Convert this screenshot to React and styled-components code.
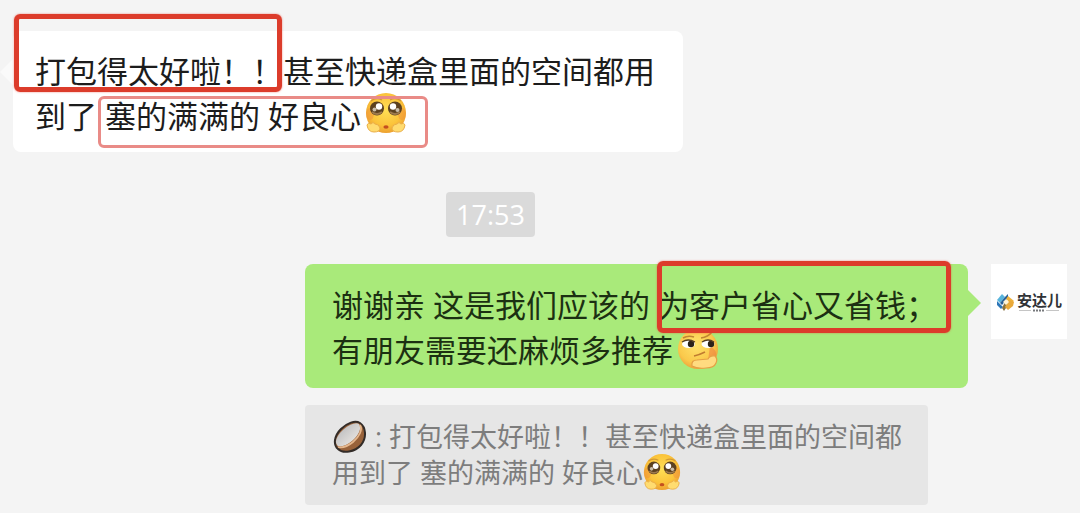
import React from "react";
import styled, { createGlobalStyle } from "styled-components";

const GlobalStyle = createGlobalStyle`
  * { box-sizing: border-box; }
  body {
    margin: 0;
    background: #f4f4f4;
    font-family: "Open Sans", "Noto Sans CJK SC", sans-serif;
  }
`;

const Chat = styled.main`
  display: flex;
  flex-direction: column;
  padding: 31px 13px 8px;
`;

const Row = styled.div`
  display: flex;
  align-items: flex-start;
  justify-content: ${(p) => (p.$own ? "flex-end" : "flex-start")};
  gap: 23px;
`;

const Column = styled.div`
  display: flex;
  flex-direction: column;
  align-items: flex-start;
  gap: 17px;
`;

const Bubble = styled.p`
  position: relative;
  min-width: ${(p) => (p.$own ? "663px" : "670px")};
  margin: 0;
  padding: ${(p) => (p.$own ? "19px 30px 15px 27px" : "18px 28px 13px 22px")};
  border-radius: 8px;
  background: ${(p) => (p.$own ? "#a9ea7a" : "#ffffff")};
  color: ${(p) => (p.$own ? "#1c3012" : "#1c1c1c")};
  font-size: 31px;
  line-height: 45px;
  white-space: nowrap;

  &::before {
    content: "";
    position: absolute;
    top: ${(p) => (p.$own ? "26px" : "28px")};
    ${(p) => (p.$own ? "left: 100%;" : "right: 100%;")}
    border: 13px solid transparent;
    ${(p) =>
      p.$own
        ? "border-left-color: #a9ea7a; border-right-width: 0;"
        : "border-right-color: #fafafa; border-left-width: 0;"}
  }
`;

const Marked = styled.mark`
  position: relative;
  display: inline-block;
  background: none;
  color: inherit;

  &::after {
    content: "";
    position: absolute;
    z-index: 1;
    inset: ${(p) => p.$inset};
    border: ${(p) => (p.$light ? "3px solid #e98b87" : "5px solid #dc3c2b")};
    border-radius: 6px;
    box-shadow: ${(p) =>
      p.$light ? "none" : "0 0 2px rgba(235, 70, 55, 0.7)"};
  }
`;

const TimeRow = styled.div`
  display: flex;
  justify-content: center;
  padding: 40px 99px 27px 0;
`;

const Time = styled.time`
  padding: 0 10px;
  border-radius: 4px;
  background: #dadada;
  color: #ffffff;
  font-size: 27px;
  line-height: 45px;
`;

const Quote = styled.blockquote`
  min-width: 623px;
  margin: 0;
  padding: 14px 26px 14px 27px;
  border-radius: 4px;
  background: #e6e6e6;
  color: #7d7d7d;
  font-size: 27px;
  line-height: 36px;
  white-space: nowrap;
`;

const Icon = styled.svg`
  width: ${(p) => p.$size}px;
  height: ${(p) => p.$size}px;
  margin: -2px 0;
  vertical-align: top;
`;

const BubbleIcon = styled(Icon)`
  margin: -2px 0 -2px 4px;
`;

const CoconutIcon = styled(Icon)`
  margin: 1px 8px 0 1px;
`;

const Avatar = styled.div`
  display: flex;
  align-items: center;
  justify-content: center;
  gap: 2px;
  width: 76px;
  height: 75px;
  background: #ffffff;
`;

const LogoMark = styled.svg`
  width: 19px;
  height: 20px;
`;

const LogoName = styled.div`
  display: flex;
  flex-direction: column;
  color: #303236;
  font-size: 15px;
  font-weight: 700;
  line-height: 18px;
`;

const LogoRule = styled.svg`
  width: 45px;
  height: 3px;
`;

function PleadingFace({ size, as: Part = Icon }) {
  return (
    <Part $size={size} viewBox="0 0 42 42" role="img" aria-label="可怜">
      <defs>
        <radialGradient id="plead" cx="50%" cy="42%" r="60%">
          <stop offset="0" stopColor="#ffdf55" />
          <stop offset="0.65" stopColor="#fbc43b" />
          <stop offset="1" stopColor="#eb9c2e" />
        </radialGradient>
      </defs>
      <ellipse cx="21" cy="21" rx="20" ry="20" fill="url(#plead)" />
      <ellipse cx="5" cy="22" rx="4" ry="6" fill="#f0923a" opacity="0.5" />
      <ellipse cx="37" cy="22" rx="4" ry="6" fill="#f0923a" opacity="0.5" />
      <path d="M6 9Q11 5 17 8M25 8Q31 5 36 9" fill="none" stroke="#d39a35" strokeWidth="1.200" />
      <circle cx="12" cy="16.500" r="7" fill="#5c4120" />
      <circle cx="30" cy="16.500" r="7" fill="#5c4120" />
      <path d="M7 20q5 4 10 0M25 20q5 4 10 0" fill="none" stroke="#9d7a4d" strokeWidth="1.800" />
      <circle cx="14" cy="14.500" r="3.200" fill="#fff" />
      <circle cx="28" cy="14.500" r="3.200" fill="#fff" />
      <circle cx="9.500" cy="17.500" r="2" fill="#c9bda9" />
      <circle cx="32.500" cy="18" r="2" fill="#c9bda9" />
      <ellipse cx="21" cy="35" rx="2.600" ry="1.800" fill="#c4501f" />
      <path d="M2 33q1-3 4-1q2-3 4 0q4 0 5 4q0 4-6 4q-6 0-7-7zM40 33q-1-3-4-1q-2-3-4 0q-4 0-5 4q0 4 6 4q6 0 7-7z" fill="#ffdc70" stroke="#eaae48" strokeWidth="1" />
    </Part>
  );
}

function ThinkingFace() {
  return (
    <BubbleIcon $size={44} viewBox="0 0 44 44" role="img" aria-label="思考">
      <defs>
        <radialGradient id="think" cx="45%" cy="40%" r="62%">
          <stop offset="0" stopColor="#ffe26c" />
          <stop offset="0.7" stopColor="#fac94b" />
          <stop offset="1" stopColor="#eba13a" />
        </radialGradient>
      </defs>
      <ellipse cx="21" cy="23" rx="20" ry="20" fill="url(#think)" />
      <path d="M33 20q8 4 6 12l-8 3z" fill="#ef8443" opacity="0.6" />
      <path d="M6 12q5-3 11-1M24 12q7-1 11-6" fill="none" stroke="#c08632" strokeWidth="1.500" />
      <ellipse cx="11.500" cy="18" rx="6.500" ry="4" fill="#fff" />
      <ellipse cx="31" cy="18" rx="6.500" ry="4" fill="#fff" />
      <circle cx="14" cy="18" r="3.200" fill="#2c2218" />
      <circle cx="34" cy="18" r="3.200" fill="#2c2218" />
      <path d="M5 16q6-4 13 0M25 16q6-4 12 0" fill="none" stroke="#594022" strokeWidth="1.300" />
      <path d="M17 30q5-1 11-4" fill="none" stroke="#c07c30" strokeWidth="1.600" />
      <path d="M15 40q-1-6 5-6l11-1q2-4 7-3q3 3 1 7q-2 5-10 5q-9 1-14-2z" fill="#ffdb80" stroke="#e5a044" strokeWidth="1.200" />
    </BubbleIcon>
  );
}

function Coconut() {
  return (
    <CoconutIcon $size={34} viewBox="0 0 34 34" role="img" aria-label="椰子">
      <defs>
        <linearGradient id="flesh" x1="0" y1="0" x2="1" y2="1">
          <stop offset="0.2" stopColor="#bfbfc0" />
          <stop offset="0.8" stopColor="#e6e3e0" />
        </linearGradient>
      </defs>
      <path d="M27 3C33 7 34 18 28 25C22 32 10 34 5 29C0 25 1 16 8 9C14 3 22 0 27 3z" fill="#98623a" stroke="#332c28" strokeWidth="2" />
      <path d="M26 4C29 8 26 15 19 21C13 26 6 28 4 25C1 21 5 14 11 9C17 4 23 2 26 4z" fill="url(#flesh)" />
      <path d="M27 5C30 10 26 17 20 22C15 26 9 28 5 27" fill="none" stroke="#e5b78d" strokeWidth="1.800" />
    </CoconutIcon>
  );
}

function BrandLogo() {
  return (
    <Avatar>
      <LogoMark viewBox="0 0 19 20" aria-hidden="true">
        <path d="M6 2L9 5L4 11L1 8z" fill="#58b4dc" />
        <path d="M1 9L7 15L5 17L1 13z" fill="#2c76b7" />
        <path d="M9 5L12 2L12 6L6 13L4 11z" fill="#285f96" />
        <path d="M12 4L18 9L15 12L10 7z" fill="#f0b23c" />
        <path d="M9 10L12 13L8 19L6 16z" fill="#8a7240" />
        <path d="M13 8L18 10L17 14L12 18L9 15z" fill="#e9a93a" />
        <path d="M7 10L10 7L13 10L10 13z" fill="#fff3d5" />
      </LogoMark>
      <LogoName>
        安达儿
        <LogoRule viewBox="0 0 45 3" aria-hidden="true">
          <path d="M2 1.500H14M29 1.500H42" stroke="#c5c5c5" strokeWidth="1" />
          <path d="M16 1.500H28" stroke="#77797c" strokeWidth="2" strokeDasharray="2 1" />
        </LogoRule>
      </LogoName>
    </Avatar>
  );
}

export default function App() {
  return (
    <>
      <GlobalStyle />
      <Chat>
        <Row>
          <Bubble>
            <Marked $inset="-35px 1px 2px -21px">打包得太好啦！！</Marked>
            甚至快递盒里面的空间都用
            <br />
            到了{" "}
            <Marked $light $inset="2px -21px -9px -7px">
              塞的满满的 好良心
              <PleadingFace size={42} as={BubbleIcon} />
            </Marked>
          </Bubble>
        </Row>
        <TimeRow>
          <Time dateTime="17:53">17:53</Time>
        </TimeRow>
        <Row $own>
          <Column>
            <Bubble $own>
              谢谢亲 这是我们应该的{" "}
              <Marked $inset="-22px -14px -5px -1px">为客户省心又省钱；</Marked>
              <br />
              有朋友需要还麻烦多推荐
              <ThinkingFace />
            </Bubble>
            <Quote>
              <Coconut />: 打包得太好啦！！甚至快递盒里面的空间都
              <br />
              用到了 塞的满满的 好良心
              <PleadingFace size={38} />
            </Quote>
          </Column>
          <BrandLogo />
        </Row>
      </Chat>
    </>
  );
}
